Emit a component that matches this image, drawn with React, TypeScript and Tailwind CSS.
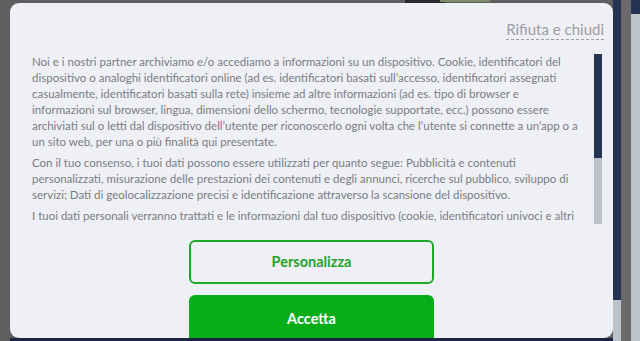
export default function App() {
  const p1 = [
    'Noi e i nostri partner archiviamo e/o accediamo a informazioni su un dispositivo. Cookie, identificatori del',
    'dispositivo o analoghi identificatori online (ad es. identificatori basati sull’accesso, identificatori assegnati',
    'casualmente, identificatori basati sulla rete) insieme ad altre informazioni (ad es. tipo di browser e',
    'informazioni sul browser, lingua, dimensioni dello schermo, tecnologie supportate, ecc.) possono essere',
    'archiviati sul o letti dal dispositivo dell’utente per riconoscerlo ogni volta che l’utente si connette a un’app o a',
    'un sito web, per una o più finalità qui presentate.',
  ];
  const p2 = [
    'Con il tuo consenso, i tuoi dati possono essere utilizzati per quanto segue: Pubblicità e contenuti',
    'personalizzati, misurazione delle prestazioni dei contenuti e degli annunci, ricerche sul pubblico, sviluppo di',
    'servizi; Dati di geolocalizzazione precisi e identificazione attraverso la scansione del dispositivo.',
  ];
  const p3 = [
    'I tuoi dati personali verranno trattati e le informazioni dal tuo dispositivo (cookie, identificatori univoci e altri',
  ];

  return (
    <div
      className="flex h-[341px] w-[640px] overflow-hidden bg-[#5f5f5f]"
      style={{ fontFamily: 'Lato, "Open Sans", sans-serif' }}
    >
      <div className="w-[10px] shrink-0" />

      <div className="flex w-[603px] shrink-0 flex-col">
        <div className="relative h-[3px] shrink-0">
          <div className="absolute left-[395px] top-0 h-[3px] w-[40px] bg-[#2a2a2a]" />
          <div className="absolute left-[430px] top-0 h-[2px] w-[50px] bg-[#7d8a6a]" />
        </div>

        <div className="flex h-[335px] shrink-0 flex-col overflow-hidden rounded-[9px] bg-[#eef0f5]">
          <div className="flex h-[51px] shrink-0 items-start justify-end pr-[9px] pt-[18px]">
            <span className="border-b border-dashed border-[#9c9ca6] pb-[1px] text-[15px] leading-[17px] text-[#9c9ca6]">
              Rifiuta e chiudi
            </span>
          </div>

          <div className="flex h-[170px] shrink-0 pl-[22px] pr-[11px]">
            <div className="flex-1 overflow-hidden text-[11.5px] leading-[16px] text-[#7a7c82]">
              <p className="whitespace-nowrap">
                {p1.map((l) => (
                  <span key={l} className="block">{l}</span>
                ))}
              </p>
              <p className="mt-[5px] whitespace-nowrap">
                {p2.map((l) => (
                  <span key={l} className="block">{l}</span>
                ))}
              </p>
              <p className="mt-[5px] whitespace-nowrap">
                {p3.map((l) => (
                  <span key={l} className="block">{l}</span>
                ))}
              </p>
            </div>
            <div className="flex w-[8px] shrink-0 flex-col bg-[#bcc2ca]">
              <div className="h-[104px] bg-[#243352]" />
            </div>
          </div>

          <div className="flex shrink-0 flex-col items-center gap-[11px] pt-[16px]">
            <button className="h-[44px] w-[245px] shrink-0 rounded-[6px] border-2 border-[#1fa52c] text-[14.5px] font-bold text-[#1fa52c]">
              Personalizza
            </button>
            <button className="h-[48px] w-[245px] shrink-0 rounded-[6px] bg-[#08ae19] text-[14.5px] font-bold text-white">
              Accetta
            </button>
          </div>
        </div>

        <div className="h-[3px] shrink-0 bg-[#1b2440]" />
      </div>

      <div className="flex w-[8px] shrink-0 flex-col bg-[#bcc2ca]">
        <div className="h-[300px] bg-[#243352]" />
      </div>
      <div className="w-[10px] shrink-0 bg-[#6a6a6a]" />
      <div className="flex w-[9px] shrink-0 flex-col bg-[#bcc3c9]">
        <div className="h-[14px] bg-[#243352]" />
      </div>
    </div>
  );
}
